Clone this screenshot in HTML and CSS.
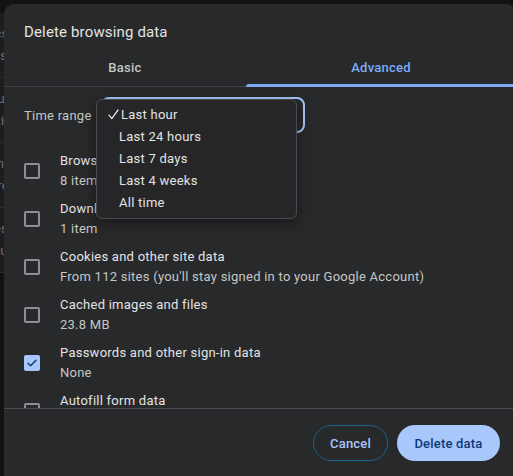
FILE: index.html
```html
<!DOCTYPE html>
<html lang="en">
<head>
  <meta charset="UTF-8" />
  <meta name="viewport" content="width=device-width, initial-scale=1.0" />
  <title>Delete browsing data</title>
  <link rel="stylesheet" href="styles.css">
</head>
<body>
  <!-- history page sitting behind the dialog -->
  <div class="page">
    <div class="history">
      <div class="bg-row"><span>Docs</span><span>docs.google.com</span></div>
      <div class="bg-row"><span>Setup</span><span>settings</span></div>
      <div class="bg-row"><span>Menu</span><span>More</span></div>
      <div class="bg-row"><span>Sites</span><span>Result</span></div>
    </div>
  </div>

  <div class="dialog">
    <h1 class="dialog-title">Delete browsing data</h1>

    <div class="tabs">
      <div class="tab tab-basic">Basic</div>
      <div class="tab active">Advanced</div>
    </div>

    <div class="dialog-body">
      <div class="range-row">
        <label class="range-label">Time range</label>
        <div class="select"></div>

        <div class="menu">
          <div class="menu-item selected">
            <svg class="menu-check" width="11" height="11" viewBox="0 0 11 11"><path d="M1 6.2 L3.8 9.6 L10 1" fill="none" stroke="#e3e3e3" stroke-width="1.3" stroke-linecap="round" stroke-linejoin="round"/></svg>
            Last hour
          </div>
          <div class="menu-item">Last 24 hours</div>
          <div class="menu-item">Last 7 days</div>
          <div class="menu-item">Last 4 weeks</div>
          <div class="menu-item">All time</div>
        </div>
      </div>

      <div class="options">
        <div class="option">
          <span class="checkbox"></span>
          <div class="option-text">
            <div class="option-title">Browsing history</div>
            <div class="option-sub">8 items</div>
          </div>
        </div>
        <div class="option">
          <span class="checkbox"></span>
          <div class="option-text">
            <div class="option-title">Download history</div>
            <div class="option-sub">1 item</div>
          </div>
        </div>
        <div class="option">
          <span class="checkbox"></span>
          <div class="option-text">
            <div class="option-title">Cookies and other site data</div>
            <div class="option-sub">From 112 sites (you'll stay signed in to your Google Account)</div>
          </div>
        </div>
        <div class="option">
          <span class="checkbox"></span>
          <div class="option-text">
            <div class="option-title">Cached images and files</div>
            <div class="option-sub">23.8 MB</div>
          </div>
        </div>
        <div class="option">
          <span class="checkbox checked">
            <svg width="10" height="8" viewBox="0 0 10 8"><path d="M1 4.2 L3.6 6.8 L9 1.2" fill="none" stroke="#0b3a78" stroke-width="1.4" stroke-linecap="round" stroke-linejoin="round"/></svg>
          </span>
          <div class="option-text">
            <div class="option-title">Passwords and other sign-in data</div>
            <div class="option-sub">None</div>
          </div>
        </div>
        <div class="option">
          <span class="checkbox"></span>
          <div class="option-text">
            <div class="option-title">Autofill form data</div>
            <div class="option-sub">&nbsp;</div>
          </div>
        </div>
      </div>
    </div>

    <div class="dialog-footer">
      <button class="btn btn-cancel">Cancel</button>
      <button class="btn btn-delete">Delete data</button>
    </div>
  </div>
</body>
</html>
```

FILE: styles.css
```css
body {
  margin: 0;
  width: 513px;
  height: 476px;
  overflow: hidden;
  position: relative;
  background: #121214;
  font-family: Roboto, "Liberation Sans", Arial, sans-serif;
  font-size: 13px;
  letter-spacing: 0.25px;
  color: #e3e3e3;
}

/* page behind */
.page {
  padding-top: 13px;
}
.history {
  background: #1e1e20;
}
.bg-row {
  height: 64px;
  border-bottom: 1px solid #2c2c2f;
  display: flex;
  flex-direction: column;
  justify-content: center;
  gap: 6px;
  margin-left: -22px;
  color: #6f6f73;
  font-size: 13px;
  line-height: 16px;
}

/* dialog */
.dialog {
  position: absolute;
  top: 4px;
  left: 4px;
  width: 512px;
  background: #28292b;
  border-radius: 10px 10px 0 0;
  display: flex;
  flex-direction: column;
  overflow: hidden;
}
.dialog-title {
  margin: 0;
  padding: 18px 20px 0;
  font-size: 15px;
  line-height: 20px;
  font-weight: 400;
  letter-spacing: 0.15px;
  color: #e3e3e3;
}

.tabs {
  display: flex;
  border-bottom: 1px solid #3e3f42;
}
.tab {
  position: relative;
  flex: 1;
  text-align: center;
  padding: 16px 0 8px;
  line-height: 20px;
  font-weight: 500;
  color: #c4c7c5;
}
.tab-basic {
  flex: 0 0 242px;
}
.tab.active {
  color: #7cacf8;
}
.tab.active::after {
  content: "";
  position: absolute;
  left: 0;
  right: 0;
  bottom: -1px;
  height: 3px;
  border-radius: 3px 3px 0 0;
  background: #7cacf8;
}

.dialog-body {
  height: 321px;
  padding: 0 20px;
  overflow: hidden;
}

.range-row {
  position: relative;
  display: flex;
  align-items: center;
  gap: 9px;
  margin-top: 10px;
  height: 36px;
}
.range-label {
  color: #c4c7c5;
}
.select {
  width: 200px;
  height: 32px;
  border: 2px solid #a8c7fa;
  border-radius: 8px;
}

/* dropdown list */
.menu {
  position: absolute;
  left: 72px;
  top: 2px;
  width: 199px;
  padding: 3px 0 5px;
  background: #262628;
  border: 1px solid #4b4b4f;
  border-radius: 6px;
  box-shadow: 0 4px 14px rgba(0,0,0,0.45);
  z-index: 10;
}
.menu-item {
  display: flex;
  align-items: center;
  height: 22px;
  padding-left: 22px;
  color: #e3e3e3;
}
.menu-item.selected {
  padding-left: 11px;
}
.menu-check {
  margin-right: 2px;
}

.options {
  margin-top: 14px;
}
.option {
  display: flex;
  align-items: center;
  gap: 20px;
  padding: 4px 0;
}
.checkbox {
  width: 12px;
  height: 12px;
  border: 2px solid #8e8f92;
  border-radius: 2px;
  flex-shrink: 0;
  display: flex;
  align-items: center;
  justify-content: center;
}
.checkbox.checked {
  background: #a8c7fa;
  border-color: #a8c7fa;
}
.option-title,
.option-sub {
  line-height: 20px;
}
.option-title {
  color: #e3e3e3;
}
.option-sub {
  color: #c4c7c5;
}

.dialog-footer {
  border-top: 1px solid #4a4b4e;
  display: flex;
  justify-content: flex-end;
  gap: 9px;
  padding: 16px 16px 20px;
}
.btn {
  height: 36px;
  border-radius: 18px;
  font-family: inherit;
  font-size: 13px;
  font-weight: 500;
  letter-spacing: 0.2px;
  cursor: pointer;
}
.btn-cancel {
  width: 75px;
  background: transparent;
  border: 1px solid #1d6390;
  color: #a8c7fa;
}
.btn-delete {
  width: 103px;
  background: #a8c7fa;
  border: none;
  color: #0b3a78;
}
```
